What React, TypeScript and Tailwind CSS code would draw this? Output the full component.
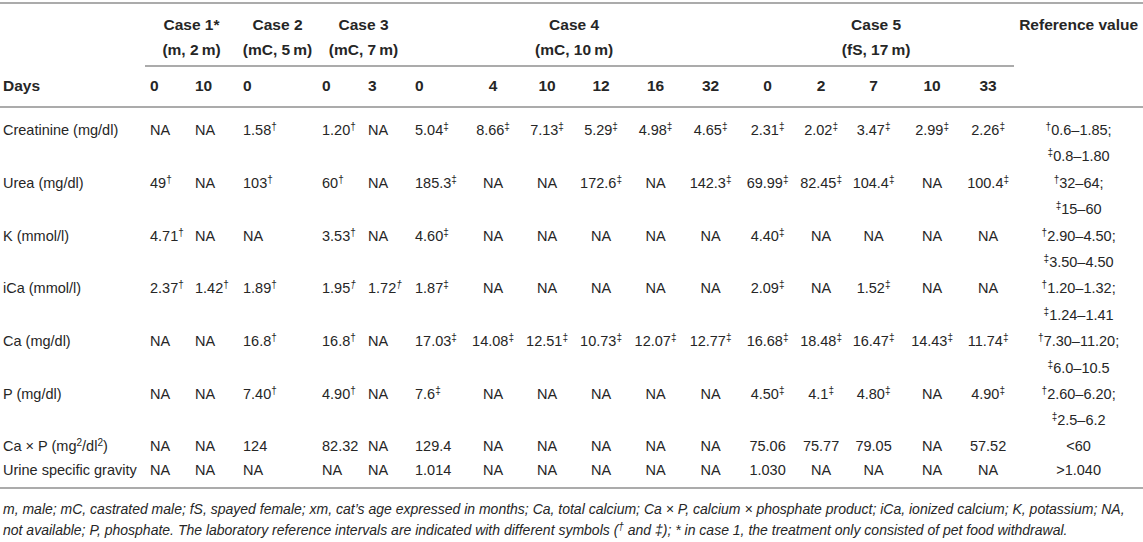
const rows: { label: React.ReactNode; values: string[]; refs: string[] }[] = [
  {
    label: "Creatinine (mg/dl)",
    values: ["NA", "NA", "1.58†", "1.20†", "NA", "5.04‡", "8.66‡", "7.13‡", "5.29‡", "4.98‡", "4.65‡", "2.31‡", "2.02‡", "3.47‡", "2.99‡", "2.26‡"],
    refs: ["†0.6–1.85;", "‡0.8–1.80"],
  },
  {
    label: "Urea (mg/dl)",
    values: ["49†", "NA", "103†", "60†", "NA", "185.3‡", "NA", "NA", "172.6‡", "NA", "142.3‡", "69.99‡", "82.45‡", "104.4‡", "NA", "100.4‡"],
    refs: ["†32–64;", "‡15–60"],
  },
  {
    label: "K (mmol/l)",
    values: ["4.71†", "NA", "NA", "3.53†", "NA", "4.60‡", "NA", "NA", "NA", "NA", "NA", "4.40‡", "NA", "NA", "NA", "NA"],
    refs: ["†2.90–4.50;", "‡3.50–4.50"],
  },
  {
    label: "iCa (mmol/l)",
    values: ["2.37†", "1.42†", "1.89†", "1.95~", "1.72~", "1.87‡", "NA", "NA", "NA", "NA", "NA", "2.09‡", "NA", "1.52‡", "NA", "NA"],
    refs: ["†1.20–1.32;", "‡1.24–1.41"],
  },
  {
    label: "Ca (mg/dl)",
    values: ["NA", "NA", "16.8†", "16.8†", "NA", "17.03‡", "14.08‡", "12.51‡", "10.73‡", "12.07‡", "12.77‡", "16.68‡", "18.48‡", "16.47‡", "14.43‡", "11.74‡"],
    refs: ["†7.30–11.20;", "‡6.0–10.5"],
  },
  {
    label: "P (mg/dl)",
    values: ["NA", "NA", "7.40†", "4.90†", "NA", "7.6‡", "NA", "NA", "NA", "NA", "NA", "4.50‡", "4.1‡", "4.80‡", "NA", "4.90‡"],
    refs: ["†2.60–6.20;", "‡2.5–6.2"],
  },
];

const days = ["0", "10", "0", "0", "3", "0", "4", "10", "12", "16", "32", "0", "2", "7", "10", "33"];

const line = "border-[#ababab]";

// first six day columns are left aligned, the rest centred
function align(i: number) {
  return i < 6 ? "pl-[5px] text-left" : "text-center";
}

function Val({ v }: { v: string }) {
  if (v.endsWith("~")) {
    return (
      <>
        {v.slice(0, -1)}
        <sup className="text-[10px] italic">†</sup>
      </>
    );
  }
  const mark = v.slice(-1);
  if (mark === "†" || mark === "‡") {
    return (
      <>
        {v.slice(0, -1)}
        <sup className="text-[10px]">{mark}</sup>
      </>
    );
  }
  return <>{v}</>;
}

function Ref({ r }: { r: string }) {
  const mark = r[0];
  if (mark === "†" || mark === "‡") {
    return (
      <div>
        <sup className="text-[10px]">{mark}</sup>
        {r.slice(1)}
      </div>
    );
  }
  return <div>{r}</div>;
}

function SimpleRow({ label, values, refs, last }: { label: React.ReactNode; values: string[]; refs: string; last?: boolean }) {
  const pad = last ? `pb-[5px] border-b-2 ${line}` : "";
  return (
    <tr className="leading-[24px]">
      <td className={`pl-[3px] align-top ${pad}`}>{label}</td>
      {values.map((v, i) => (
        <td key={i} className={`align-top ${align(i)} ${pad}`}>
          {v}
        </td>
      ))}
      <td className={`align-top text-center ${pad}`}>{refs}</td>
    </tr>
  );
}

export default function App() {
  const caseTh = `pt-[8px] pb-[3px] align-top text-center font-bold border-b-2 ${line}`;
  return (
    <div className="w-[1143px] h-[542px] overflow-hidden bg-white text-[#262626] font-['Liberation_Sans',Arial,sans-serif] text-[14.5px]">
      <div className={`mt-[2px] border-t-2 ${line}`}>
        <table className="table-fixed w-full border-separate border-spacing-0 whitespace-nowrap">
          <colgroup>
            <col className="w-[145px]" />
            <col className="w-[45px]" />
            <col className="w-[48px]" />
            <col className="w-[79px]" />
            <col className="w-[46px]" />
            <col className="w-[47px]" />
            <col className="w-[56px]" />
            <col className="w-[54px]" />
            <col className="w-[54px]" />
            <col className="w-[54px]" />
            <col className="w-[55px]" />
            <col className="w-[55px]" />
            <col className="w-[59px]" />
            <col className="w-[48px]" />
            <col className="w-[57px]" />
            <col className="w-[60px]" />
            <col className="w-[52px]" />
            <col className="w-[129px]" />
          </colgroup>
          <thead className="text-[15.5px] leading-[25px]">
            <tr>
              <th />
              <th colSpan={2} className={caseTh}>
                Case 1*
                <br />
                (m, 2&thinsp;m)
              </th>
              <th className={caseTh}>
                Case 2
                <br />
                (mC, 5&thinsp;m)
              </th>
              <th colSpan={2} className={caseTh}>
                Case 3
                <br />
                (mC, 7&thinsp;m)
              </th>
              <th colSpan={6} className={caseTh}>
                Case 4
                <br />
                (mC, 10&thinsp;m)
              </th>
              <th colSpan={5} className={caseTh}>
                Case 5
                <br />
                (fS, 17&thinsp;m)
              </th>
              <th rowSpan={2} className={`pt-[8px] align-top text-center font-bold border-b-2 ${line}`}>
                Reference value
              </th>
            </tr>
            <tr>
              <th className={`pl-[3px] pt-[5.5px] pb-[8.5px] text-left font-bold border-b-2 ${line}`}>Days</th>
              {days.map((d, i) => (
                <th key={i} className={`pt-[5.5px] pb-[8.5px] font-bold border-b-2 ${line} ${align(i)}`}>
                  {d}
                </th>
              ))}
            </tr>
          </thead>
          <tbody>
            {rows.map((r, ri) => {
              const top = ri === 0 ? "pt-[9px]" : "";
              return (
                <tr key={ri} className="leading-[26.4px]">
                  <td className={`pl-[3px] align-top ${top}`}>{r.label}</td>
                  {r.values.map((v, i) => (
                    <td key={i} className={`align-top ${top} ${align(i)}`}>
                      <Val v={v} />
                    </td>
                  ))}
                  <td className={`align-top text-center ${top}`}>
                    {r.refs.map((x, k) => (
                      <Ref key={k} r={x} />
                    ))}
                  </td>
                </tr>
              );
            })}
            <SimpleRow
              label={
                <>
                  Ca × P (mg<sup className="text-[10px]">2</sup>/dl<sup className="text-[10px]">2</sup>)
                </>
              }
              values={["NA", "NA", "124", "82.32", "NA", "129.4", "NA", "NA", "NA", "NA", "NA", "75.06", "75.77", "79.05", "NA", "57.52"]}
              refs="<60"
            />
            <SimpleRow
              label="Urine specific gravity"
              values={["NA", "NA", "NA", "NA", "NA", "1.014", "NA", "NA", "NA", "NA", "NA", "1.030", "NA", "NA", "NA", "NA"]}
              refs=">1.040"
              last
            />
          </tbody>
        </table>
      </div>
      <p className="mt-[10px] pl-[3px] text-[14px] leading-[21px] italic whitespace-nowrap">
        m, male; mC, castrated male; fS, spayed female; xm, cat’s age expressed in months; Ca, total calcium; Ca × P,
        calcium × phosphate product; iCa, ionized calcium; K, potassium; NA,
        <br />
        not available; P, phosphate. The laboratory reference intervals are indicated with different symbols (
        <sup className="text-[10px]">†</sup> and ‡); * in case 1, the treatment only consisted of pet food withdrawal.
      </p>
    </div>
  );
}
